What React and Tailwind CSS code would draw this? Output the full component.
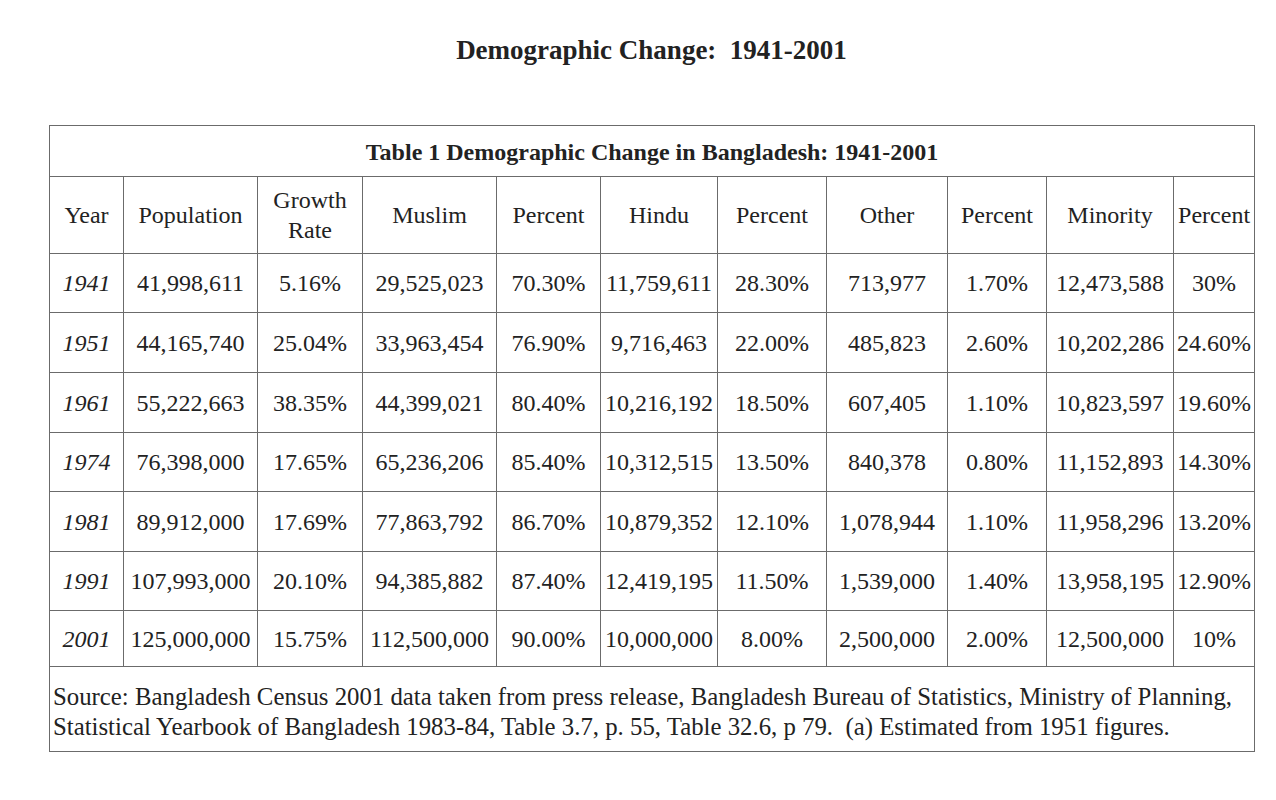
import React from 'react';

const COLS = [74, 134, 105, 134, 104, 117, 109, 121, 99, 127, 81];

const ROWS = [
  { year: '1941', pop: '41,998,611', growth: '5.16%', muslim: '29,525,023', mp: '70.30%', hindu: '11,759,611', hp: '28.30%', other: '713,977', op: '1.70%', minority: '12,473,588', minp: '30%', h: 'h-[59px]' },
  { year: '1951', pop: '44,165,740', growth: '25.04%', muslim: '33,963,454', mp: '76.90%', hindu: '9,716,463', hp: '22.00%', other: '485,823', op: '2.60%', minority: '10,202,286', minp: '24.60%', h: 'h-[60px]' },
  { year: '1961', pop: '55,222,663', growth: '38.35%', muslim: '44,399,021', mp: '80.40%', hindu: '10,216,192', hp: '18.50%', other: '607,405', op: '1.10%', minority: '10,823,597', minp: '19.60%', h: 'h-[60px]' },
  { year: '1974', pop: '76,398,000', growth: '17.65%', muslim: '65,236,206', mp: '85.40%', hindu: '10,312,515', hp: '13.50%', other: '840,378', op: '0.80%', minority: '11,152,893', minp: '14.30%', h: 'h-[59px]' },
  { year: '1981', pop: '89,912,000', growth: '17.69%', muslim: '77,863,792', mp: '86.70%', hindu: '10,879,352', hp: '12.10%', other: '1,078,944', op: '1.10%', minority: '11,958,296', minp: '13.20%', h: 'h-[60px]' },
  { year: '1991', pop: '107,993,000', growth: '20.10%', muslim: '94,385,882', mp: '87.40%', hindu: '12,419,195', hp: '11.50%', other: '1,539,000', op: '1.40%', minority: '13,958,195', minp: '12.90%', h: 'h-[59px]' },
  { year: '2001', pop: '125,000,000', growth: '15.75%', muslim: '112,500,000', mp: '90.00%', hindu: '10,000,000', hp: '8.00%', other: '2,500,000', op: '2.00%', minority: '12,500,000', minp: '10%', h: 'h-[56px]' },
];

const cell = 'border border-[#6b6b6b] px-0 text-center align-middle whitespace-nowrap';

export default function App() {
  return (
    <div className="min-h-screen bg-white text-[#222222]" style={{ fontFamily: '"Liberation Serif", "Times New Roman", serif' }}>
      <div className="ml-[49px] w-[1205px] pt-[30px]">
        <h1 className="text-center text-[27px] font-bold leading-[40px]">
          Demographic Change:{'\u00a0 '}1941-2001
        </h1>

        <table className="mt-[55px] w-[1205px] table-fixed border-collapse text-[24px] leading-[30px]">
          <colgroup>
            {COLS.map((w, i) => (
              <col key={i} style={{ width: w }} />
            ))}
          </colgroup>
          <tbody>
            <tr className="h-[51px]">
              <td colSpan={11} className={`${cell} pt-[2px] font-bold`}>
                Table 1 Demographic Change in Bangladesh: 1941-2001
              </td>
            </tr>
            <tr className="h-[77px]">
              <td className={cell}>Year</td>
              <td className={cell}>Population</td>
              <td className={cell}>
                Growth
                <br />
                Rate
              </td>
              <td className={cell}>Muslim</td>
              <td className={cell}>Percent</td>
              <td className={cell}>Hindu</td>
              <td className={cell}>Percent</td>
              <td className={cell}>Other</td>
              <td className={cell}>Percent</td>
              <td className={cell}>Minority</td>
              <td className={cell}>Percent</td>
            </tr>
            {ROWS.map((r) => (
              <tr key={r.year} className={r.h}>
                <td className={`${cell} italic`}>{r.year}</td>
                <td className={cell}>{r.pop}</td>
                <td className={cell}>{r.growth}</td>
                <td className={cell}>{r.muslim}</td>
                <td className={cell}>{r.mp}</td>
                <td className={cell}>{r.hindu}</td>
                <td className={cell}>{r.hp}</td>
                <td className={cell}>{r.other}</td>
                <td className={cell}>{r.op}</td>
                <td className={cell}>{r.minority}</td>
                <td className={cell}>{r.minp}</td>
              </tr>
            ))}
            <tr className="h-[85px]">
              <td colSpan={11} className="border border-[#6b6b6b] px-[3px] pt-[6px] text-left align-middle text-[24.8px] leading-[30px] whitespace-nowrap">
                Source: Bangladesh Census 2001 data taken from press release, Bangladesh Bureau of Statistics, Ministry of Planning,
                <br />
                Statistical Yearbook of Bangladesh 1983-84, Table 3.7, p. 55, Table 32.6, p 79.{'\u00a0 '}(a) Estimated from 1951 figures.
              </td>
            </tr>
          </tbody>
        </table>
      </div>
    </div>
  );
}
